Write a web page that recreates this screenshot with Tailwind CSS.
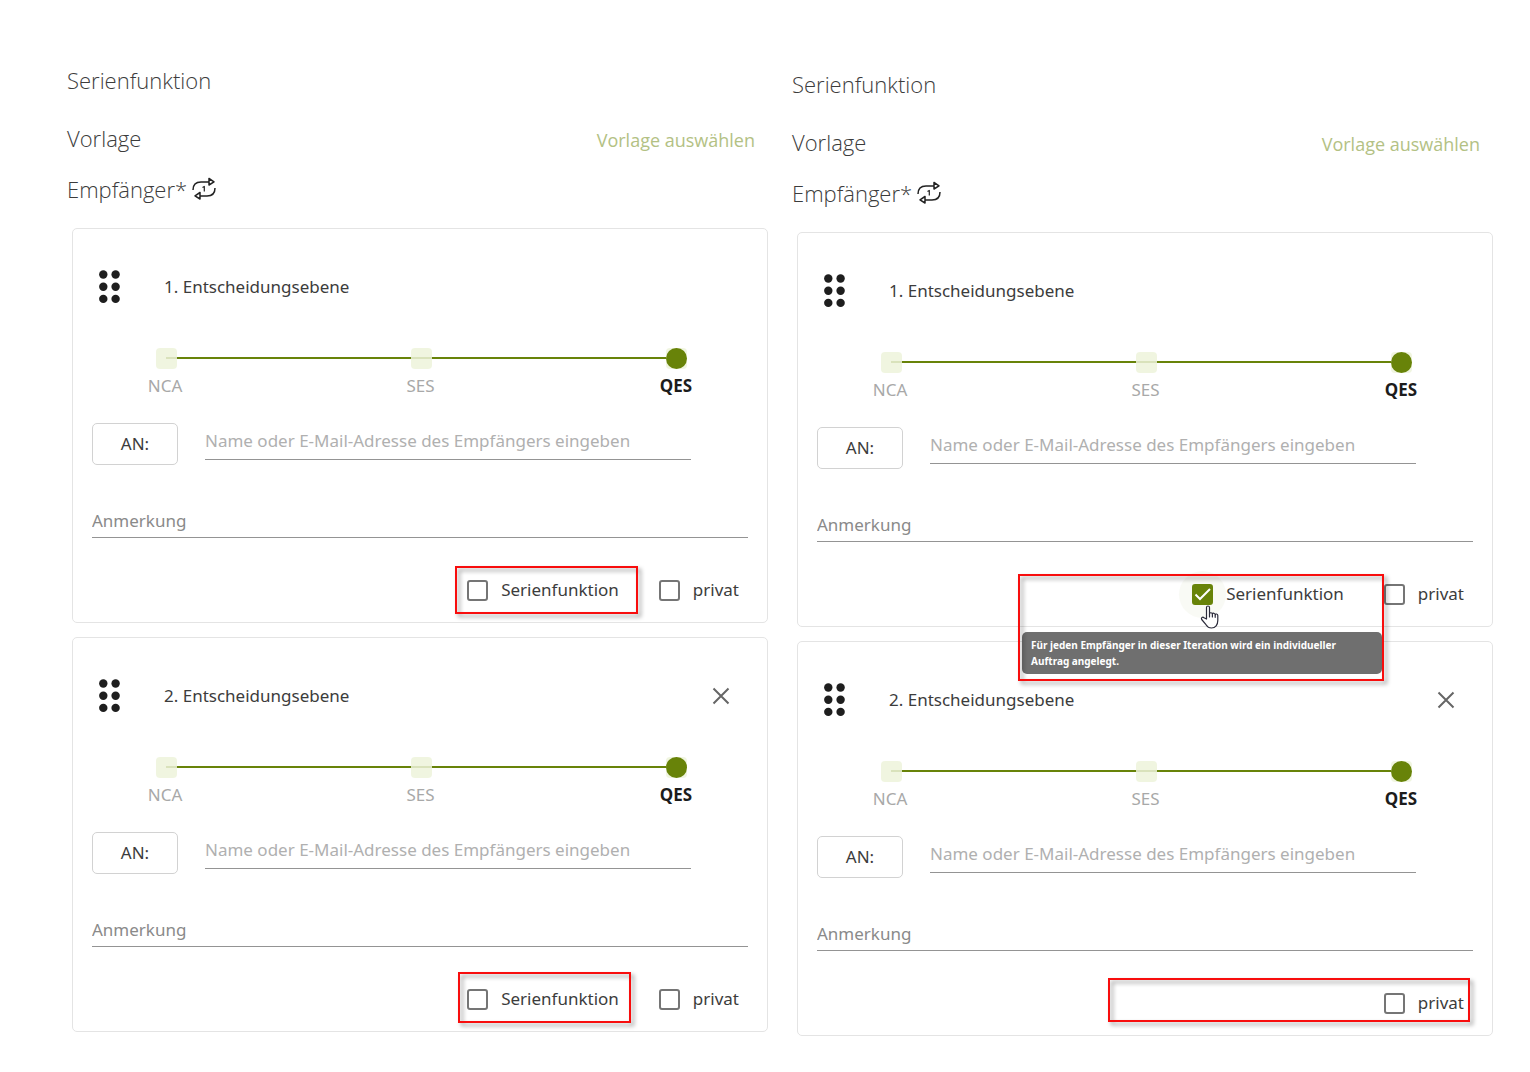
<!DOCTYPE html>
<html lang="de">
<head>
  <meta charset="UTF-8" />
  <meta name="viewport" content="width=device-width, initial-scale=1.0" />
  <script src="https://cdn.jsdelivr.net/npm/@tailwindcss/browser@4"></script>
  <title>Serienfunktion</title>
</head>
<body class="bg-white text-[#3c3c3c] font-['Noto_Sans','Open_Sans',sans-serif] text-[17px] leading-7">
  <main class="grid grid-cols-2 items-start gap-6 pl-[67px] pr-[37px]">
    <section id="before" class="pt-16"></section>
    <section id="after" class="pt-[68px]"></section>
  </main>

  <script>
    const columns = [
      {
        id: "before",
        levels: [
          { nr: 1, series: true, frame: "-top-1 right-[110px] w-[183px] h-12" },
          { nr: 2, series: true, close: true, frame: "-top-[7px] right-[117px] w-[173px] h-[51px]" },
        ],
      },
      {
        id: "after",
        levels: [
          { nr: 1, series: true, checked: true, tooltip: true, frame: "top-0 right-[89px] w-[366px] h-[107px]" },
          { nr: 2, close: true, frame: "-top-[5px] right-[3px] w-[362px] h-[44px]" },
        ],
      },
    ];

    const checkboxClass = "peer size-[21px] shrink-0 appearance-none rounded-[3px] border-2 border-[#757575] checked:border-[#688309] checked:bg-[#688309]";

    function renderSeries(level, id) {
      if (!level.series) return "";
      return `
        <div class="relative flex items-center mr-10">
          ${level.checked ? `<span class="absolute -left-[13px] size-[47px] rounded-full bg-[#f9faf5]"></span>` : ""}
          <input type="checkbox" id="${id}-series" class="relative ${checkboxClass}" ${level.checked ? "checked" : ""} />
          <svg class="pointer-events-none absolute left-0 hidden size-[21px] peer-checked:block" viewBox="0 0 21 21" fill="none" stroke="#fff" stroke-width="2">
            <path d="M3.500 10.500l4.500 4.500L18 5" />
          </svg>
          <label for="${id}-series" class="relative pl-[13px]">Serienfunktion</label>
          ${level.checked ? `
          <svg class="absolute left-2 top-[25px] z-30 h-6 w-5" viewBox="0 0 20 24" fill="#fff" stroke="#2b2b3a" stroke-width="1.200" stroke-linejoin="round" stroke-linecap="round">
            <path d="M6.500 14V2.500c0-2 3-2 3 0V9c0-1.800 2.900-1.600 2.900.2.300-1.500 2.800-1.300 2.800.6.400-1.300 2.600-1 2.600.8v5c0 4-2.300 7.400-6.300 7.400-3 0-4.300-1.300-5.500-3.300L1.700 14.500c-1-1.800 1-3 2.300-1.800z" />
            <path d="M9.500 9v3M12.400 9.500V12M15.200 10v2.300" />
          </svg>` : ""}
        </div>`;
    }

    function renderLevel(level, column) {
      const id = `${column}-${level.nr}`;
      return `
        <article class="rounded-[5px] border border-[#e4e4e4] px-[19px] pt-8 pb-3">
          <header class="flex h-[52px] items-center pl-[7px] pr-[18px]">
            <svg class="h-[34px] w-[21px]" viewBox="0 0 21 34" fill="#1e1e1e">
              <circle cx="4.300" cy="4.500" r="4.200" /><circle cx="16.600" cy="4.500" r="4.200" />
              <circle cx="4.300" cy="16.700" r="4.200" /><circle cx="16.600" cy="16.700" r="4.200" />
              <circle cx="4.300" cy="28.900" r="4.200" /><circle cx="16.600" cy="28.900" r="4.200" />
            </svg>
            <h3 class="ml-11 flex-1">${level.nr}. Entscheidungsebene</h3>
            ${level.close ? `
            <button type="button" aria-label="Entfernen">
              <svg class="size-[18px]" viewBox="0 0 18 18" stroke="#666" stroke-width="2"><path d="M1.500 1.500l15 15M16.500 1.500l-15 15" /></svg>
            </button>` : ""}
          </header>

          <!-- Signature level -->
          <div class="mt-[34px] ml-16 mr-[61px]">
            <div class="relative flex h-[22px] items-center justify-between">
              <span class="absolute inset-x-[10px] top-[10px] h-[2px] bg-[#688309]"></span>
              <span class="relative size-[21px] rounded-sm bg-[#edf3da]/85"></span>
              <span class="relative size-[21px] rounded-sm bg-[#edf3da]/85"></span>
              <span class="relative size-[21px] rounded-sm bg-[#edf3da]/85"></span>
              <input type="range" min="0" max="2" value="2" aria-label="Signaturlevel" class="absolute inset-0 w-full appearance-none bg-transparent [&::-webkit-slider-thumb]:size-[21px] [&::-webkit-slider-thumb]:appearance-none [&::-webkit-slider-thumb]:rounded-full [&::-webkit-slider-thumb]:bg-[#688309]" />
            </div>
            <div class="mt-[5px] flex justify-between pr-0.5 leading-6 text-[#a8a8a8]">
              <span class="flex w-[18px] justify-center">NCA</span>
              <span class="flex w-[18px] justify-center">SES</span>
              <span class="flex w-[18px] justify-center font-bold text-[#1c1c1c]">QES</span>
            </div>
          </div>

          <div class="mt-[25px] flex items-start pr-[57px]">
            <button type="button" class="h-[42px] w-[86px] rounded-[5px] border border-[#d2d2d2]">AN:</button>
            <input type="text" aria-label="Empfänger" placeholder="Name oder E-Mail-Adresse des Empfängers eingeben" class="ml-[27px] h-[37px] min-w-0 flex-1 border-b border-[#949494] pb-0.5 outline-none placeholder:text-[#b0b0b0]" />
          </div>

          <input type="text" aria-label="Anmerkung" placeholder="Anmerkung" class="mt-10 block h-[33px] w-full border-b border-[#949494] pb-0.5 outline-none placeholder:text-[#8a8a8a]" />

          <footer class="relative mt-8 flex h-10 items-center justify-end pr-[9px]">
            ${renderSeries(level, id)}
            <div class="flex items-center">
              <input type="checkbox" id="${id}-private" class="${checkboxClass}" />
              <label for="${id}-private" class="pl-[13px]">privat</label>
            </div>
            <div class="pointer-events-none absolute z-20 border-2 border-[#f80d0d] drop-shadow-[3px_3px_2px_rgba(0,0,0,0.4)] ${level.frame}"></div>
            ${level.tooltip ? `
            <div role="tooltip" class="absolute right-[91px] top-[58px] z-10 w-[360px] rounded-[5px] bg-[#6f6f6f] px-[9px] py-[5px] text-[10px] leading-4 font-bold text-white">
              Für jeden Empfänger in dieser Iteration wird ein individueller<br />
              Auftrag angelegt.
            </div>` : ""}
          </footer>
        </article>`;
    }

    columns.forEach(column => {
      document.getElementById(column.id).innerHTML = `
        <h2 class="font-['Open_Sans'] text-[22px] leading-8 font-light">Serienfunktion</h2>
        <div class="mt-[26px] flex items-center justify-between pr-[13px]">
          <h2 class="font-['Open_Sans'] text-[22px] leading-8 font-light">Vorlage</h2>
          <a href="#" class="pt-1 font-['Open_Sans'] text-lg text-[#b3c184]">Vorlage auswählen</a>
        </div>
        <div class="mt-[19px] flex items-center gap-[5px]">
          <h2 class="font-['Open_Sans'] text-[22px] leading-8 font-light">Empfänger*</h2>
          <svg class="size-6" viewBox="0 0 24 24" fill="none" stroke="#222" stroke-width="1.500" stroke-linejoin="round">
            <path d="M1 13c0-5 3-8 8-8h8M17 1.500v6.500l5-3.200zM23 11c0 5-3 8-8 8H8M8 15.500v6.500l-5-3.200z" />
            <path d="M10.500 10.500l1.800-1v5" stroke-width="1.200" />
          </svg>
        </div>
        <div class="mt-[23px] ml-[5px] space-y-3.5">
          ${column.levels.map(level => renderLevel(level, column.id)).join("")}
        </div>
      `;
    });
  </script>
</body>
</html>
